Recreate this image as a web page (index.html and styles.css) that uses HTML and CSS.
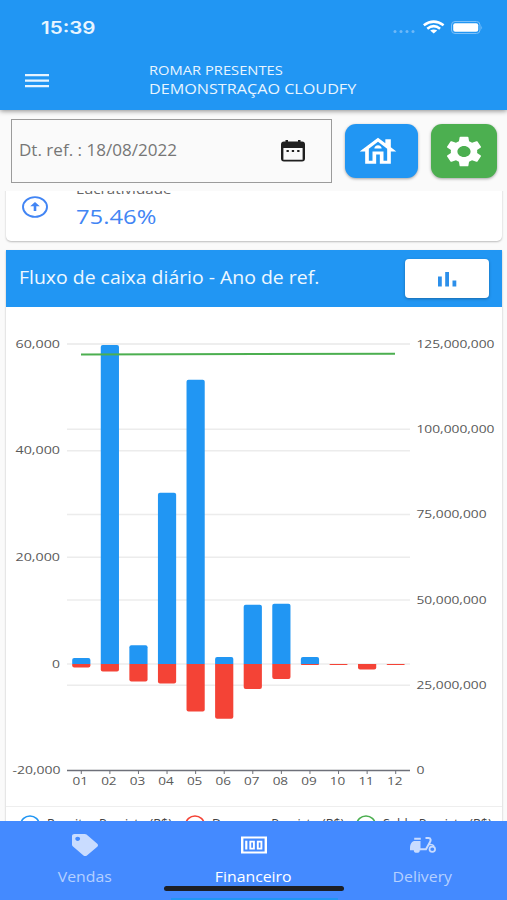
FILE: index.html
```html
<!DOCTYPE html>
<html lang="pt-BR">
    <head>
        <title>Financeiro</title>
        <meta charset="UTF-8">
        <link rel="stylesheet" href="styles.css">
    </head>
    <body>
        <header class="topbar">
            <div class="status">
                <span class="clock">15:39</span>
                <svg class="status-icons" viewBox="0 0 90 18">
                    <g fill="#6fb9f8">
                        <circle cx="2" cy="13.500" r="1.500"/><circle cx="8" cy="13.500" r="1.500"/><circle cx="14" cy="13.500" r="1.500"/><circle cx="20" cy="13.500" r="1.500"/>
                    </g>
                    <g fill="none" stroke="white" stroke-width="2.600">
                        <path d="M30.800 7.300Q40.700 -0.100 50.600 7.300"/>
                        <path d="M34.300 10.700Q40.700 5.700 47.100 10.700"/>
                    </g>
                    <path d="M37.200 12.600Q40.700 10.500 44.200 12.600L40.700 15.500Z" fill="white"/>
                    <rect x="58.500" y="3.500" width="28.500" height="12" rx="3.500" fill="none" stroke="#7cc0f9"/>
                    <rect x="60.200" y="5.200" width="25" height="8.600" rx="2" fill="white"/>
                    <path d="M88.300 7.500q1.400 2 0 4z" fill="#7cc0f9"/>
                </svg>
            </div>
            <div class="titlebar">
                <svg class="menu" viewBox="0 0 24 14" preserveAspectRatio="none"><path d="M0 0h24v2.300H0zM0 5.500h24v2.300H0zM0 11h24v2.300H0z" fill="#e6f4ff"/></svg>
                <div class="company">
                    <div><span class="company-name">ROMAR PRESENTES</span></div>
                    <div><span class="company-branch">DEMONSTRAÇAO CLOUDFY</span></div>
                </div>
            </div>
        </header>

        <section class="filters">
            <div class="date">
                <span class="date-text">Dt. ref. : 18/08/2022</span>
                <svg class="calendar" viewBox="0 0 24 22">
                    <path d="M4.500 0H7v1.500h10V0h2.500v1.500H21a3 3 0 0 1 3 3v14a3 3 0 0 1-3 3H3a3 3 0 0 1-3-3v-14a3 3 0 0 1 3-3h1.500zM2.400 8v11.700h19.200V8z" fill="#1f1f1f" fill-rule="evenodd"/>
                    <path d="M5.500 10h2.300v2H5.500zM10.800 10h2.300v2h-2.300zM16.200 10h2.300v2h-2.300z" fill="#1f1f1f"/>
                </svg>
            </div>
            <button class="btn home">
                <svg class="btn-icon" viewBox="0 0 24 24" preserveAspectRatio="none"><path d="M19 9.300V4h-3v2.600L12 3 2 12h3v8h6v-6h2v6h6v-8h3l-3-2.700zM17 18h-2v-6H9v6H7v-7.810l5-4.500 5 4.500V18zM10 10h4c0-1.100-.9-2-2-2s-2 .9-2 2z"/></svg>
            </button>
            <button class="btn gear">
                <svg class="btn-icon" viewBox="0 0 24 24" preserveAspectRatio="none"><path d="M19.140 12.940c.04-.3.06-.61.06-.94 0-.32-.02-.64-.07-.94l2.030-1.580c.18-.14.23-.41.12-.61l-1.920-3.320c-.12-.22-.37-.29-.59-.22l-2.390.96c-.5-.38-1.030-.7-1.620-.94l-.36-2.540c-.04-.24-.24-.41-.48-.41h-3.840c-.24 0-.43.17-.47.41l-.36 2.540c-.59.24-1.130.57-1.620.94l-2.390-.96c-.22-.08-.47 0-.59.22L2.740 8.870c-.12.21-.08.47.12.61l2.030 1.580c-.05.3-.09.63-.09.94s.02.64.07.94l-2.030 1.580c-.18.14-.23.41-.12.61l1.920 3.320c.12.22.37.29.59.22l2.390-.96c.5.38 1.030.7 1.620.94l.36 2.540c.05.24.24.41.48.41h3.840c.24 0 .44-.17.47-.41l.36-2.540c.59-.24 1.130-.56 1.620-.94l2.390.96c.22.08.47 0 .59-.22l1.920-3.320c.12-.22.07-.47-.12-.61l-2.010-1.580zM12 15.600c-1.980 0-3.600-1.620-3.600-3.600s1.620-3.600 3.600-3.600 3.600 1.620 3.600 3.600-1.620 3.600-3.600 3.600z"/></svg>
            </button>
        </section>

        <main class="content">
            <section class="card profit">
                <svg class="arrow" viewBox="0 0 26 22">
                    <ellipse cx="13" cy="11" rx="12" ry="9.900" fill="none" stroke="#4285f4" stroke-width="1.900"/>
                    <path d="M13 6l4.800 4.300h-3.500V15h-2.600v-4.700H8.200z" fill="#4285f4"/>
                </svg>
                <div>
                    <div class="profit-label"><span>Lucratividade</span></div>
                    <div class="profit-value"><span>75.46%</span></div>
                </div>
            </section>

            <section class="card cashflow">
                <div class="cashflow-head">
                    <span class="cashflow-title">Fluxo de caixa diário - Ano de ref.</span>
                    <button class="chart-btn">
                        <svg class="bars-icon" viewBox="0 0 20 16"><path d="M1 5.500h3.800V15.500H1zM8.200 1H12v14.500H8.200zM15.500 9.500h3.800v6h-3.800z" fill="#2c8fea"/></svg>
                    </button>
                </div>
                <svg class="chart" viewBox="6 307 496 499">
                    <g id="grid" stroke="#ececec" stroke-width="1.500"></g>
                    <g id="bars"></g>
                    <path d="M81 354.500L395 353.800" stroke="#4caf50" stroke-width="2"/>
                    <g id="axis" stroke="#6e7079"></g>
                    <g id="labels" class="labels"></g>
                </svg>
                <div class="legend">
                    <div class="legend-item">
                        <svg class="ring" viewBox="0 0 20 18"><ellipse cx="10" cy="9" rx="9" ry="8" stroke="#2196f3"/></svg>
                        <span>Receitas Previsto (R$)</span>
                    </div>
                    <div class="legend-item">
                        <svg class="ring" viewBox="0 0 20 18"><ellipse cx="10" cy="9" rx="9" ry="8" stroke="#f44336"/></svg>
                        <span>Despesas Previsto (R$)</span>
                    </div>
                    <div class="legend-item">
                        <svg class="ring" viewBox="0 0 20 18"><ellipse cx="10" cy="9" rx="9" ry="8" stroke="#4caf50"/></svg>
                        <span>Saldo Previsto (R$)</span>
                    </div>
                </div>
            </section>
        </main>

        <nav class="tabs">
            <div class="tab">
                <svg class="tab-icon" viewBox="0 0 512 512" preserveAspectRatio="none"><path d="M0 252.118V48C0 21.490 21.490 0 48 0h204.118a48 48 0 0 1 33.941 14.059l211.882 211.882c18.745 18.745 18.745 49.137 0 67.882L293.823 497.941c-18.745 18.745-49.137 18.745-67.882 0L14.059 286.059A48 48 0 0 1 0 252.118zM112 64c-26.510 0-48 21.490-48 48s21.490 48 48 48 48-21.490 48-48-21.490-48-48-48z"/></svg>
                <span>Vendas</span>
            </div>
            <div class="tab active">
                <svg class="tab-icon" viewBox="0 0 26 22"><path d="M0 2.500h26v17H0zM2.400 4.600v12.800h21.200V4.600z" fill-rule="evenodd"/><path d="M4.200 6.700h2.200v8.800H4.200z"/><path d="M9.300 7.600h3.600v7H9.300zM16.800 7.600h3.600v7h-3.600z" fill="none" stroke="white" stroke-width="1.900"/></svg>
                <span>Financeiro</span>
            </div>
            <div class="tab">
                <svg class="tab-icon" viewBox="0 0 26 22">
                    <path d="M4.200 3.800h6.600v2H4.200zM0 14.500C0 9.500 2 7 5 7h5.500v9.200H9.800a3 2.600 0 0 1-6 0H0z"/>
                    <g fill="none" stroke="#c9dcff" stroke-width="2">
                        <path d="M15.500 4h3c2.500 0 2.500 2.500 1.500 4l-4 7.200h-6"/>
                        <ellipse cx="22.300" cy="15.300" rx="2.800" ry="2.600" stroke-width="1.700"/>
                        <path d="M19 10.500q3.500-.5 5 1.500" stroke-width="1.500"/>
                    </g>
                </svg>
                <span>Delivery</span>
            </div>
            <div class="home-indicator"></div>
        </nav>

        <script>
            const receitas = [1100, 59800, 3500, 32100, 53300, 1300, 11100, 11300, 1300, 0, 0, 0];
            const despesas = [700, 1450, 3300, 3700, 8950, 10300, 4700, 2850, 200, 200, 1050, 200];
            const left = 67, right = 410, top60 = 344, bottom = 770.5;
            const step = (right - left) / 12;
            const y = v => bottom - (v + 20000) * (bottom - top60) / 80000;
            const zero = y(0);

            function text(x, ty, str, anchor, width) {
                return `<text x="${x}" y="${ty}" text-anchor="${anchor}" textLength="${width}" lengthAdjust="spacingAndGlyphs">${str}</text>`;
            }

            let grid = "", bars = "", labels = "";
            // left axis, then right axis
            [[60000, 44.5], [40000, 44.5], [20000, 44.5], [0, 8]].forEach(([v, w]) => {
                grid += `<path d="M${left} ${y(v)}H${right}"/>`;
                labels += text(60, y(v) + 3.7, v.toLocaleString("en-US"), "end", w);
            });
            labels += text(60.5, bottom + 3.7, "-20,000", "end", 48);
            [[125, 78], [100, 78], [75, 70], [50, 70], [25, 70]].forEach(([m, w]) => {
                const gy = bottom - m * (bottom - top60) / 125;
                grid += `<path d="M${left} ${gy}H${right}"/>`;
                labels += text(416.5, gy + 3.7, m + ",000,000", "start", w);
            });
            labels += text(416.5, bottom + 3.7, "0", "start", 8);

            // rounded only on the outer end of the bar
            function bar(x, from, to, colour) {
                const r = Math.min(2, Math.abs(to - from));
                const s = to < from ? r : -r;
                return `<path fill="${colour}" d="M${x} ${from}V${to + s}Q${x} ${to} ${x + r} ${to}H${x + 18.2 - r}Q${x + 18.2} ${to} ${x + 18.2} ${to + s}V${from}Z"/>`;
            }

            let axis = `<path d="M${left} ${bottom}H${right}" stroke-width="1.6"/>`;
            for (let i = 0; i < 12; i++) {
                const c = left + step * (i + 0.5);
                if (receitas[i]) bars += bar(c - 9.1, zero, y(receitas[i]), "#2196f3");
                bars += bar(c - 9.1, zero, y(-despesas[i]), "#f44336");
                axis += `<path d="M${c} ${bottom}v3.5"/>`;
                labels += text(c - 1, 784.5, String(i + 1).padStart(2, "0"), "middle", 15.5);
            }
            document.getElementById("grid").innerHTML = grid;
            document.getElementById("bars").innerHTML = bars;
            document.getElementById("axis").innerHTML = axis;
            document.getElementById("labels").innerHTML = labels;
        </script>
    </body>
</html>
```
FILE: styles.css
```css
* {
    box-sizing: border-box;
}
body {
    margin: 0;
    width: 507px;
    height: 900px;
    overflow: hidden;
    display: flex;
    flex-direction: column;
    background-color: #fafafa;
    font-family: "Open Sans", "Noto Sans", sans-serif;
}
svg {
    display: block;
    flex: none;
}
span {
    display: inline-block;
    white-space: nowrap;
    transform-origin: left center;
}
button {
    border: none;
    padding: 0;
    display: flex;
    align-items: center;
    justify-content: center;
}
.topbar {
    flex: none;
    height: 110px;
    background-color: #2196f3;
    box-shadow: 0 1px 5px rgba(0, 0, 0, 0.45);
    color: #e8f5ff;
}
.status {
    display: flex;
    justify-content: space-between;
    height: 55px;
    padding: 18px 24px 0 41px;
}
.clock {
    font-family: Inter, sans-serif;
    font-weight: 600;
    font-size: 17px;
    line-height: 20px;
    transform: scaleX(1.21);
}
.status-icons {
    width: 90px;
    height: 18px;
}
.titlebar {
    display: flex;
    padding: 7px 0 0 25px;
}
.menu {
    width: 24px;
    height: 14px;
    margin-top: 12px;
}
.company {
    margin-left: 100px;
    font-size: 13.5px;
    font-weight: 500;
    line-height: 17.5px;
}
.company-name {
    transform: scaleX(1.09);
}
.company-branch {
    font-size: 14.5px;
    transform: scaleX(1.115);
}
.filters {
    flex: none;
    display: flex;
    height: 81px;
    padding: 9px 10px 0 11px;
}
.date {
    display: flex;
    justify-content: space-between;
    width: 321px;
    height: 64px;
    padding: 20px 26px 0 7px;
    border: 1.5px solid #9b9b9b;
    color: #767676;
}
.date-text {
    font-size: 15.5px;
    line-height: 20px;
    transform: scaleX(1.1);
}
.calendar {
    width: 24px;
    height: 22px;
}
.btn {
    height: 54px;
    margin-top: 5px;
    border-radius: 11px;
    box-shadow: 0 1px 3px rgba(0, 0, 0, 0.35);
    fill: white;
}
.home {
    width: 73px;
    margin-left: 12.5px;
    padding-right: 6px;
    background-color: #2196f3;
}
.gear {
    width: 66px;
    margin-left: 13px;
    background-color: #4caf50;
}
.btn-icon {
    width: 44px;
    height: 37px;
}
.content {
    flex: 1;
    min-height: 0;
    overflow: hidden;
    padding: 0 5px 0 6px;
}
.card {
    background-color: white;
    box-shadow: 0 1px 2px rgba(0, 0, 0, 0.25);
}
.profit {
    display: flex;
    height: 60px;
    margin-top: -10px;
    border-radius: 5px;
    padding: 0 16px;
}
.arrow {
    width: 26px;
    height: 22px;
    margin-top: 15px;
}
.profit-label {
    height: 24px;
    margin-left: 28px;
    font-size: 13px;
    line-height: 17px;
    color: #666;
}
.profit-label span {
    transform: scaleX(1.17);
}
.profit-value {
    margin-left: 28px;
    font-size: 20.5px;
    line-height: 23px;
    color: #4285f4;
}
.profit-value span {
    transform: scaleX(1.16);
}
.cashflow {
    margin-top: 9px;
    height: 600px;
}
.cashflow-head {
    display: flex;
    align-items: center;
    justify-content: space-between;
    height: 57px;
    padding: 0 13px;
    background-color: #2196f3;
    color: #eef8ff;
}
.cashflow-title {
    font-size: 17.5px;
    font-weight: 500;
    margin-top: -4px;
    transform: scaleX(1.11);
}
.chart-btn {
    width: 84px;
    height: 39px;
    border-radius: 4px;
    background-color: white;
    box-shadow: 0 1px 3px rgba(0, 0, 0, 0.3);
}
.bars-icon {
    width: 20px;
    height: 16px;
}
.chart {
    width: 496px;
    height: 499px;
}
.labels {
    font-size: 11.5px;
    font-weight: 500;
    fill: #5a5a5a;
}
.legend {
    display: grid;
    grid-template-columns: 165px 171px 1fr;
    border-top: 1px solid #eee;
    padding: 8px 0 0 14px;
    font-size: 12px;
    line-height: 18px;
    color: #444;
}
.legend-item {
    display: flex;
}
.legend-item span {
    margin-left: 7px;
    transform: scaleX(1.05);
}
.ring {
    width: 20px;
    height: 18px;
    fill: none;
    stroke-width: 1.6;
}
.tabs {
    position: relative;
    flex: none;
    display: grid;
    grid-template-columns: repeat(3, 1fr);
    height: 79px;
    padding-top: 13px;
    background-color: #448aff;
}
.tab {
    display: flex;
    flex-direction: column;
    align-items: center;
    font-size: 14.5px;
    font-weight: 500;
    line-height: 20px;
    color: #b5d0ff;
    fill: #c9dcff;
}
.tab span {
    margin-top: 11px;
    transform-origin: center;
    transform: scaleX(1.09);
}
.tab.active {
    color: white;
    fill: white;
}
.tab-icon {
    width: 26px;
    height: 22px;
}
.home-indicator {
    position: absolute;
    left: 164px;
    bottom: 9px;
    width: 180px;
    height: 5px;
    border-radius: 3px;
    background-color: #1c1f26;
}
/* strip of the page behind the bar */
.tabs::after {
    content: "";
    position: absolute;
    left: 171px;
    bottom: 0;
    width: 167px;
    height: 2px;
    background-color: #2196f3;
}
```
